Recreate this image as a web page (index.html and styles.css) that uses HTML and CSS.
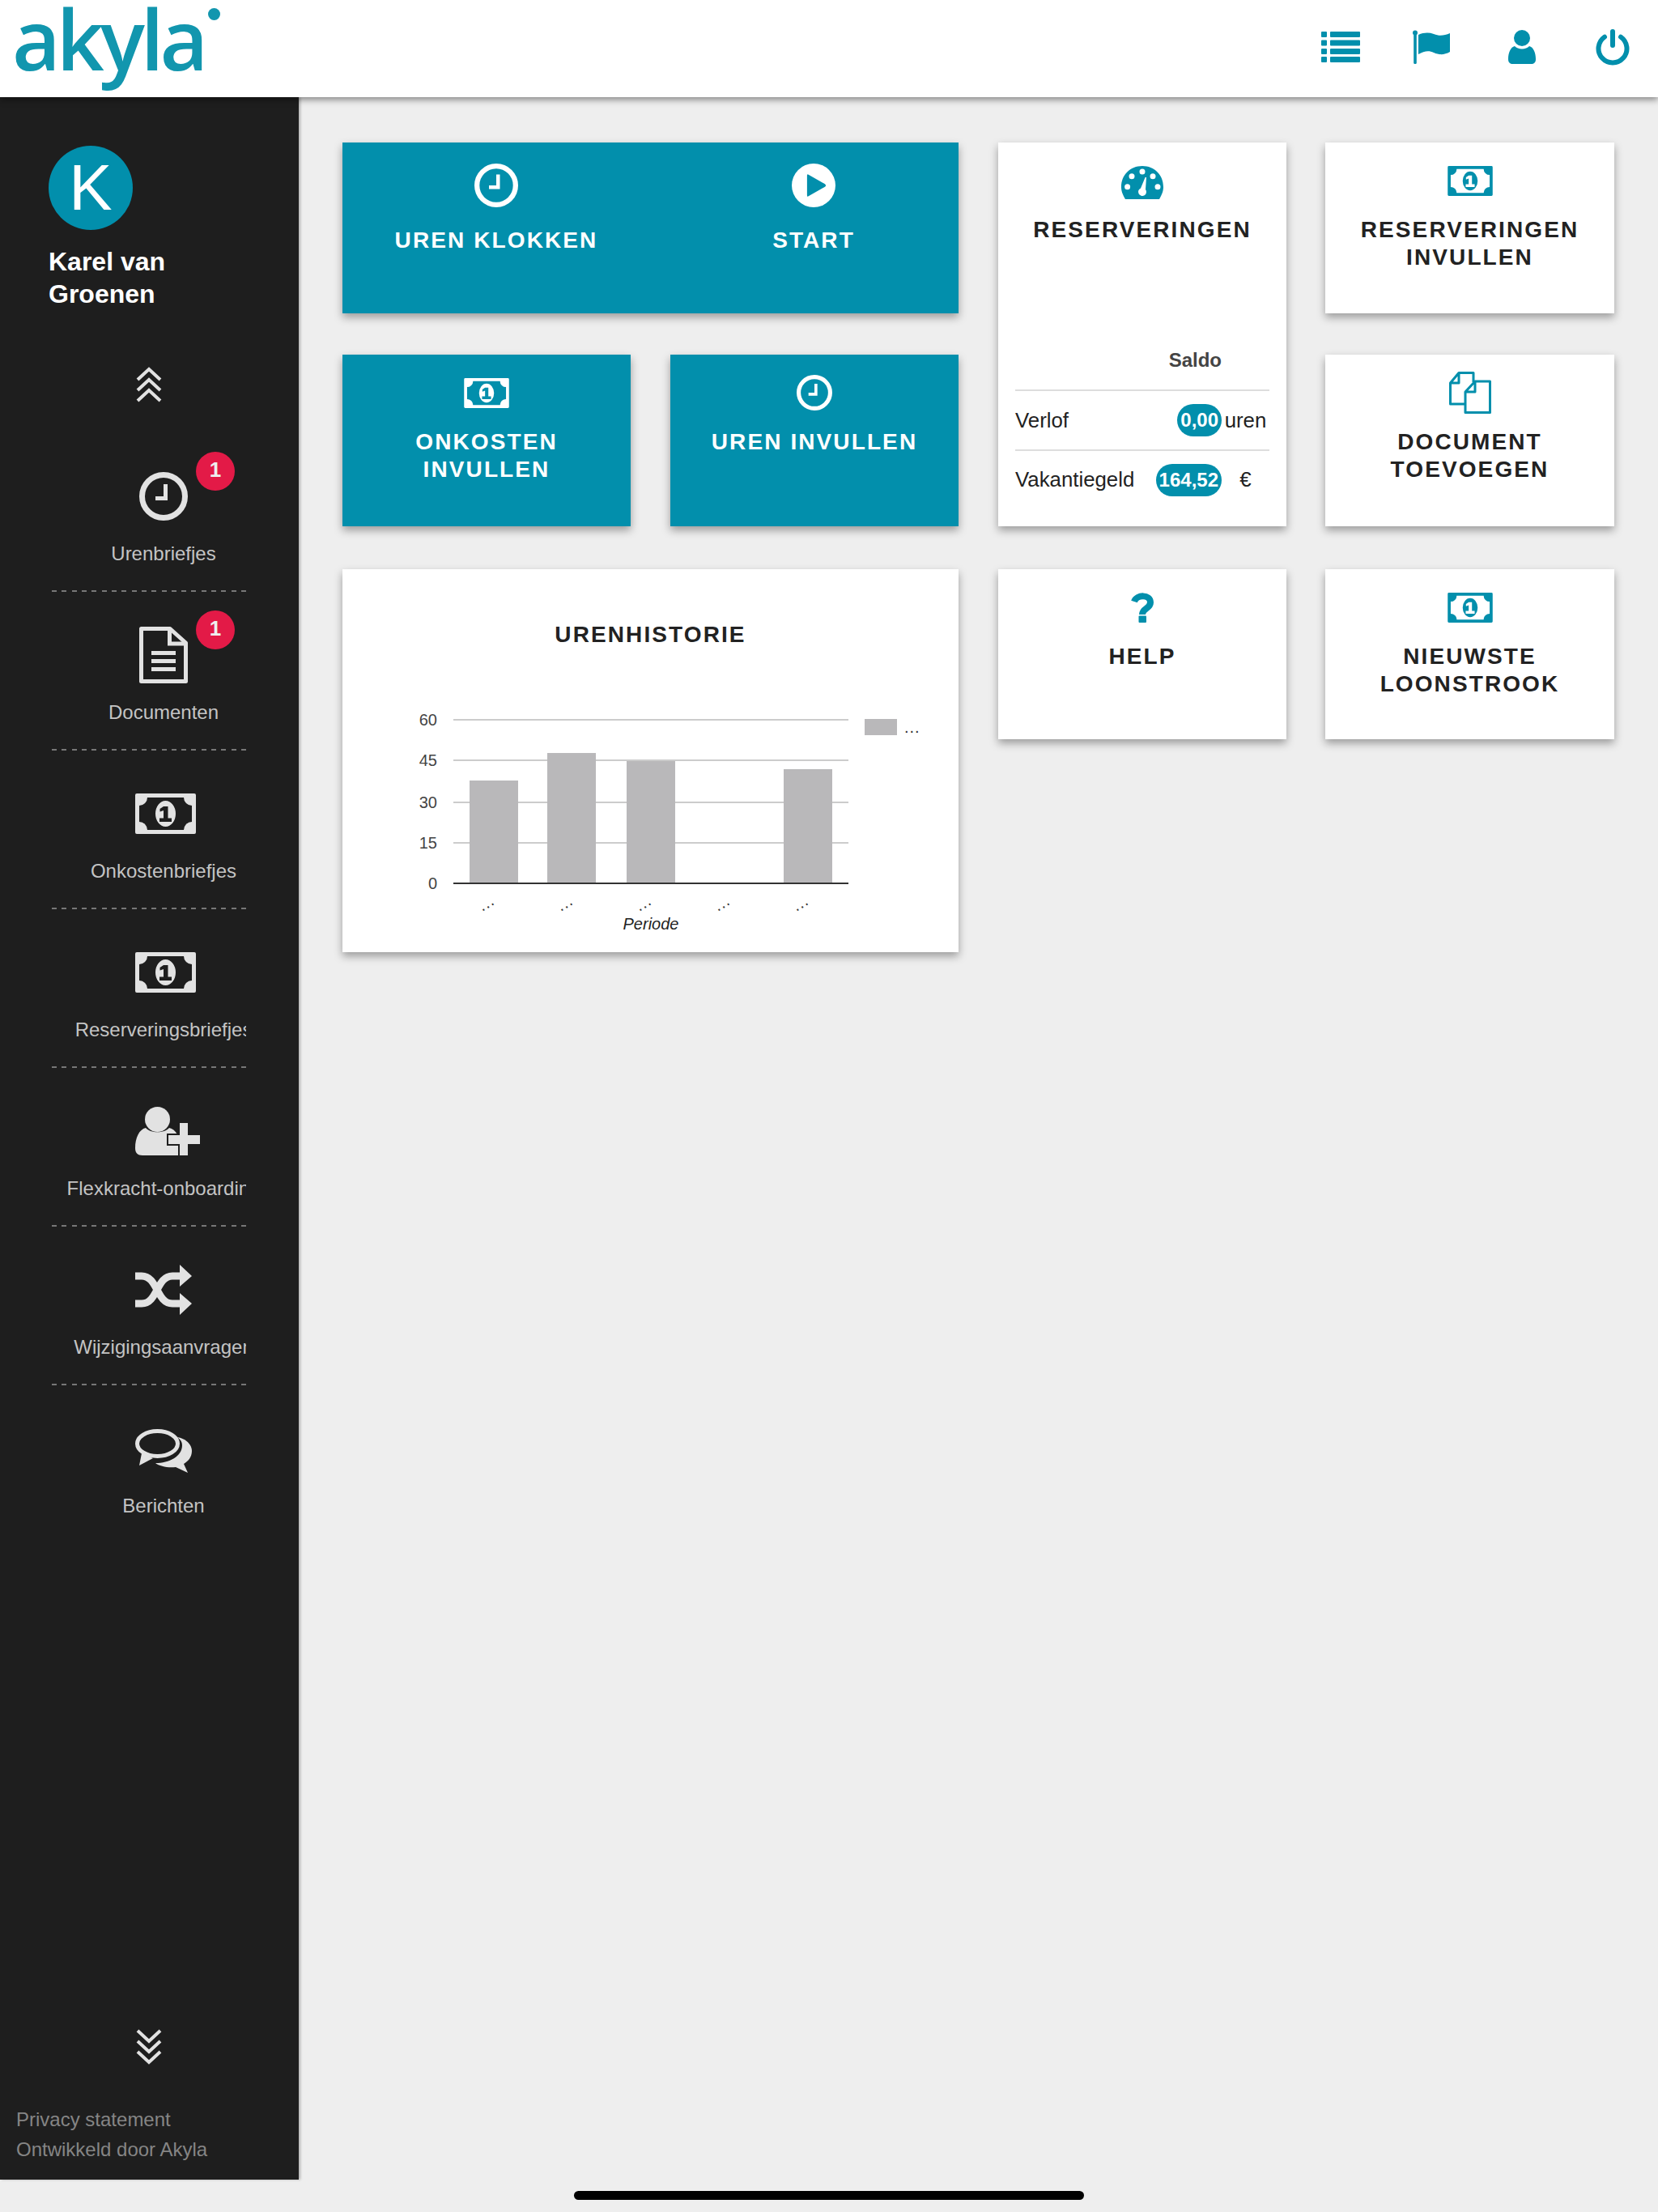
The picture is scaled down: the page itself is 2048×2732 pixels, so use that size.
FILE: index.html
```html
<!DOCTYPE html>
<html lang="nl">
<head>
  <meta charset="UTF-8">
  <meta name="viewport" content="width=device-width, initial-scale=1.0">
  <title>Akyla</title>
  <link rel="stylesheet" href="styles.css">
</head>
<body>
  <svg class="icon-defs" aria-hidden="true">
    <symbol id="i-clock" viewBox="0 0 60 60">
      <circle cx="30" cy="30" r="26.5" fill="none" stroke="currentColor" stroke-width="7"/>
      <path fill="currentColor" d="M30 15h5v20H20v-5h10z"/>
    </symbol>
    <symbol id="i-play" viewBox="0 0 60 60">
      <path fill="currentColor" fill-rule="evenodd" d="M30 0a30 30 0 1 1 0 60a30 30 0 1 1 0-60zM21 16.500q0-2.500 2-1.300L45.500 28q2.500 2 0 4L23 44.800q-2 1.200-2-1.300z"/>
    </symbol>
    <symbol id="i-money" viewBox="0 0 75 50">
      <path fill="currentColor" fill-rule="evenodd" d="M2 0h71a2 2 0 0 1 2 2v46a2 2 0 0 1-2 2H2a2 2 0 0 1-2-2V2a2 2 0 0 1 2-2zM15 5a10 10 0 0 1-10 10v20a10 10 0 0 1 10 10h45a10 10 0 0 1 10-10V15a10 10 0 0 1-10-10zM37.500 9a12.500 16 0 1 1 0 32a12.500 16 0 1 1 0-32zM35 16h5.500v14.500H45V35H30v-4.500h5V21l-4.500 1.500V19z"/>
    </symbol>
    <symbol id="i-doc" viewBox="0 0 60 70">
      <path fill="none" stroke="currentColor" stroke-width="5" stroke-linejoin="round" d="M2.500 2.500H38L57.500 20v47.500H2.500z"/>
      <path fill="none" stroke="currentColor" stroke-width="5" d="M37.500 3v18H57"/>
      <path fill="currentColor" d="M15 30h30v5H15zM15 40h30v5H15zM15 50h30v5H15z"/>
    </symbol>
    <symbol id="i-person-plus" viewBox="0 0 80 60">
      <circle cx="27.500" cy="15.500" r="15.500" fill="currentColor"/>
      <path fill="currentColor" d="M13 26c6 7 23 7 29 0c8 2 13 10 13 22v12H9c-6 0-9-3-9-9c0-13 5-23 13-25z"/>
      <path class="plus-gap" d="M55 20h10v15h15v11H65v14H55V46H41V35h14z"/>
    </symbol>
    <symbol id="i-shuffle" viewBox="0 0 70 62">
      <path fill="none" stroke="currentColor" stroke-width="9" d="M0 14h8c20 0 18 34 38 34h10M0 48h8c20 0 18-34 38-34h10"/>
      <path fill="currentColor" d="M55 0l15 14L55 27zM55 35l15 13L55 62z"/>
    </symbol>
    <symbol id="i-chat" viewBox="0 0 70 55">
      <ellipse cx="27.500" cy="18" rx="25" ry="15.500" fill="none" stroke="currentColor" stroke-width="5"/>
      <path fill="currentColor" d="M8 30L5 45l17-9zM52 10c12 2 18 10 18 17c0 8-5 13-10 16l5 11l-15-7c-10 1-20-1-25-5c17 0 33-8 33-22c0-4-2-7-6-10z"/>
    </symbol>
    <symbol id="i-up" viewBox="0 0 32 44">
      <path fill="none" stroke="currentColor" stroke-width="4" d="M2 16L16 3l14 13M2 29l14-13l14 13M2 42l14-13l14 13"/>
    </symbol>
    <symbol id="i-down" viewBox="0 0 32 44">
      <path fill="none" stroke="currentColor" stroke-width="4" d="M2 2l14 13L30 2M2 15l14 13l14-13M2 28l14 13l14-13"/>
    </symbol>
  </svg>

  <div class="page">
    <header class="topbar">
      <div class="logo">akyla<span class="logo-dot"></span></div>
      <div class="top-icons">
        <div class="top-slot">
          <svg class="ico-list" viewBox="0 0 48 38"><path d="M1 0h5a1 1 0 0 1 1 1v5a1 1 0 0 1-1 1H1a1 1 0 0 1-1-1V1a1 1 0 0 1 1-1zM12 0h35a1 1 0 0 1 1 1v5a1 1 0 0 1-1 1H12a1 1 0 0 1-1-1V1a1 1 0 0 1 1-1zM1 10.500h5a1 1 0 0 1 1 1v5a1 1 0 0 1-1 1H1a1 1 0 0 1-1-1v-5a1 1 0 0 1 1-1zM12 10.500h35a1 1 0 0 1 1 1v5a1 1 0 0 1-1 1H12a1 1 0 0 1-1-1v-5a1 1 0 0 1 1-1zM1 21h5a1 1 0 0 1 1 1v5a1 1 0 0 1-1 1H1a1 1 0 0 1-1-1v-5a1 1 0 0 1 1-1zM12 21h35a1 1 0 0 1 1 1v5a1 1 0 0 1-1 1H12a1 1 0 0 1-1-1v-5a1 1 0 0 1 1-1zM1 31h5a1 1 0 0 1 1 1v5a1 1 0 0 1-1 1H1a1 1 0 0 1-1-1v-5a1 1 0 0 1 1-1zM12 31h35a1 1 0 0 1 1 1v5a1 1 0 0 1-1 1H12a1 1 0 0 1-1-1v-5a1 1 0 0 1 1-1z"/></svg>
        </div>
        <div class="top-slot">
          <svg class="ico-flag" viewBox="0 0 46 42"><circle cx="3" cy="3.500" r="3"/><rect x="1.200" y="3" width="3.600" height="39" rx="1.500"/><path d="M7 6c7-3 13-3 19-1c7 3 13 2 20-1v23c-7 4-13 4-20 1c-6-3-12-2-19 2z"/></svg>
        </div>
        <div class="top-slot">
          <svg class="ico-user" viewBox="0 0 34 42"><circle cx="17" cy="10" r="10"/><path d="M8 20c4 4.500 14 4.500 18 0c5 1 8 8 8 16c0 4-2 6-6 6H6c-4 0-6-2-6-6c0-8 3-15 8-16z"/></svg>
        </div>
        <div class="top-slot">
          <svg class="ico-power" viewBox="0 0 42 46"><path fill="none" stroke="currentColor" stroke-width="6" stroke-linecap="round" d="M11 10.600A17.500 17.500 0 1 0 31 10.600M21 4v17"/></svg>
        </div>
      </div>
    </header>

    <div class="content">
      <aside class="sidebar">
        <div class="profile">
          <div class="avatar">K</div>
          <div class="profile-name">Karel van<br>Groenen</div>
        </div>
        <svg class="chevrons chevrons-up"><use href="#i-up"/></svg>

        <nav class="nav">
          <div class="nav-item">
            <span class="badge">1</span>
            <div class="nav-icon"><svg class="ni-clock"><use href="#i-clock"/></svg></div>
            <div class="nav-label">Urenbriefjes</div>
          </div>
          <div class="nav-item">
            <span class="badge">1</span>
            <div class="nav-icon"><svg class="ni-doc"><use href="#i-doc"/></svg></div>
            <div class="nav-label">Documenten</div>
          </div>
          <div class="nav-item">
            <div class="nav-icon"><svg class="ni-money"><use href="#i-money"/></svg></div>
            <div class="nav-label">Onkostenbriefjes</div>
          </div>
          <div class="nav-item">
            <div class="nav-icon"><svg class="ni-money"><use href="#i-money"/></svg></div>
            <div class="nav-label">Reserveringsbriefjes</div>
          </div>
          <div class="nav-item">
            <div class="nav-icon"><svg class="ni-person"><use href="#i-person-plus"/></svg></div>
            <div class="nav-label">Flexkracht-onboarding</div>
          </div>
          <div class="nav-item">
            <div class="nav-icon"><svg class="ni-shuffle"><use href="#i-shuffle"/></svg></div>
            <div class="nav-label">Wijzigingsaanvragen</div>
          </div>
          <div class="nav-item nav-item-last">
            <div class="nav-icon"><svg class="ni-chat"><use href="#i-chat"/></svg></div>
            <div class="nav-label">Berichten</div>
          </div>
        </nav>

        <svg class="chevrons chevrons-down"><use href="#i-down"/></svg>
        <div class="side-footer">
          <div>Privacy statement</div>
          <div>Ontwikkeld door Akyla</div>
        </div>
      </aside>

      <main class="main">
        <section class="tiles tiles-top">
          <div class="card card-teal card-wide">
            <div class="split">
              <div class="split-part">
                <div class="card-icon"><svg class="ci-round"><use href="#i-clock"/></svg></div>
                <div class="card-title">UREN KLOKKEN</div>
              </div>
              <div class="split-part">
                <div class="card-icon"><svg class="ci-round"><use href="#i-play"/></svg></div>
                <div class="card-title">START</div>
              </div>
            </div>
          </div>

          <div class="card card-saldo">
            <div class="card-icon">
              <svg class="ci-gauge" viewBox="0 0 52 41"><path fill-rule="evenodd" d="M5 41C1 34 0 30 0 26C0 11 11 0 26 0s26 11 26 26c0 4-1 8-5 15zM7.600 22.200a3.500 3.500 0 1 0 0 7a3.500 3.500 0 1 0 0-7zM13 9.200a3.500 3.500 0 1 0 0 7a3.500 3.500 0 1 0 0-7zM26 3.500a3.500 3.500 0 1 0 0 7a3.500 3.500 0 1 0 0-7zM39 9.200a3.500 3.500 0 1 0 0 7a3.500 3.500 0 1 0 0-7zM45 22.200a3.500 3.500 0 1 0 0 7a3.500 3.500 0 1 0 0-7zM29.600 14L31 14L30 29A5 5 0 1 1 24 27.400z"/></svg>
            </div>
            <div class="card-title">RESERVERINGEN</div>
            <table class="saldo">
              <tr>
                <th></th>
                <th class="saldo-head">Saldo</th>
                <th></th>
              </tr>
              <tr class="saldo-row">
                <td>Verlof</td>
                <td class="saldo-value"><span class="pill">0,00</span></td>
                <td class="saldo-unit">uren</td>
              </tr>
              <tr>
                <td>Vakantiegeld</td>
                <td class="saldo-value"><span class="pill">164,52</span></td>
                <td class="saldo-unit">€</td>
              </tr>
            </table>
          </div>

          <div class="card card-end">
            <div class="card-icon"><svg class="ci-money"><use href="#i-money"/></svg></div>
            <div class="card-title">RESERVERINGEN<br>INVULLEN</div>
          </div>

          <div class="card card-teal">
            <div class="card-icon"><svg class="ci-money"><use href="#i-money"/></svg></div>
            <div class="card-title">ONKOSTEN<br>INVULLEN</div>
          </div>

          <div class="card card-teal">
            <div class="card-icon"><svg class="ci-clock"><use href="#i-clock"/></svg></div>
            <div class="card-title">UREN INVULLEN</div>
          </div>

          <div class="card card-end">
            <div class="card-icon">
              <svg class="ci-docs" viewBox="0 0 52 52"><path fill="none" stroke="currentColor" stroke-width="3" stroke-linejoin="round" d="M20 40H1.500V14L12 1.500h18V13M12 2v12H2M32 12h18.500v38.500H20V25zM32 12v13H20"/></svg>
            </div>
            <div class="card-title">DOCUMENT<br>TOEVOEGEN</div>
          </div>
        </section>

        <section class="tiles tiles-bottom">
          <div class="card card-wide card-chart">
            <div class="card-title">URENHISTORIE</div>
            <svg class="chart" viewBox="0 0 761 375">
              <g class="grid">
                <rect x="137" y="87" width="488" height="2"/>
                <rect x="137" y="137" width="488" height="2"/>
                <rect x="137" y="189" width="488" height="2"/>
                <rect x="137" y="239" width="488" height="2"/>
              </g>
              <g class="bars">
                <rect x="157" y="163" width="60" height="126"/>
                <rect x="253" y="129" width="60" height="160"/>
                <rect x="351" y="139" width="60" height="150"/>
                <rect x="545" y="149" width="60" height="140"/>
                <rect x="645" y="87" width="40" height="20"/>
              </g>
              <rect class="axis" x="137" y="289" width="488" height="2"/>
              <g class="y-labels">
                <text x="117" y="95">60</text>
                <text x="117" y="145">45</text>
                <text x="117" y="197">30</text>
                <text x="117" y="247">15</text>
                <text x="117" y="297">0</text>
              </g>
              <g class="x-labels">
                <text transform="translate(181 320) rotate(-30)">...</text>
                <text transform="translate(278 320) rotate(-30)">...</text>
                <text transform="translate(375 320) rotate(-30)">...</text>
                <text transform="translate(472 320) rotate(-30)">...</text>
                <text transform="translate(569 320) rotate(-30)">...</text>
              </g>
              <text class="legend-label" x="694" y="104">...</text>
              <text class="x-title" x="381" y="347">Periode</text>
            </svg>
          </div>

          <div class="card card-short">
            <div class="card-icon">
              <svg class="ci-help" viewBox="0 0 28 37"><path fill="none" stroke="currentColor" stroke-width="8" d="M4 11C7 2 24 2 24 12c0 8-10 7-10 15"/><rect x="9.500" y="28.500" width="9.500" height="8.500" rx="1"/></svg>
            </div>
            <div class="card-title">HELP</div>
          </div>

          <div class="card card-short card-end">
            <div class="card-icon"><svg class="ci-money"><use href="#i-money"/></svg></div>
            <div class="card-title">NIEUWSTE<br>LOONSTROOK</div>
          </div>
        </section>
      </main>
    </div>

    <div class="home-bar"><div class="home-indicator"></div></div>
  </div>
</body>
</html>
```

FILE: styles.css
```css
* {
  margin: 0;
  padding: 0;
  box-sizing: border-box;
}

body {
  background-color: #eeeeee;
  font-family: "Liberation Sans", Arial, sans-serif;
  color: #222;
  overflow: hidden;
}

.icon-defs {
  display: none;
}

.page {
  width: 2048px;
  height: 2732px;
  display: flex;
  flex-direction: column;
}

/* top bar */
.topbar {
  height: 120px;
  flex: none;
  background-color: white;
  display: flex;
  justify-content: space-between;
  box-shadow: 0 3px 8px rgba(0,0,0,0.45);
  position: relative;
  z-index: 2;
}

.logo {
  font-family: "Open Sans", sans-serif;
  font-weight: 600;
  font-size: 103px;
  line-height: 94px;
  height: 120px;
  color: #1296ae;
  padding-left: 15px;
  position: relative;
  letter-spacing: -5px;
}

.logo-dot {
  position: absolute;
  left: 257px;
  top: 10px;
  width: 15px;
  height: 15px;
  border-radius: 50%;
  background-color: #1296ae;
}

.top-icons {
  display: flex;
  align-items: center;
}

.top-slot {
  width: 112px;
  display: flex;
  justify-content: center;
  color: #028fac;
  fill: #028fac;
  padding-bottom: 4px;
}

.ico-list { width: 48px; height: 38px; }
.ico-flag { width: 46px; height: 42px; }
.ico-user { width: 34px; height: 42px; }
.ico-power { width: 42px; height: 46px; }

.content {
  flex: 1;
  display: flex;
  min-height: 0;
}

/* sidebar */
.sidebar {
  width: 369px;
  flex: none;
  background-color: #1e1e1e;
  box-shadow: 2px 0 3px rgba(0,0,0,0.25);
  display: flex;
  flex-direction: column;
  padding-top: 60px;
  color: #e2e2e2;
}

.profile {
  padding-left: 60px;
}

.avatar {
  width: 104px;
  height: 104px;
  border-radius: 50%;
  background-color: #028fac;
  color: white;
  font-size: 80px;
  display: flex;
  justify-content: center;
  align-items: center;
}

.profile-name {
  margin-top: 19px;
  font-size: 32px;
  font-weight: bold;
  line-height: 40px;
  color: white;
}

.chevrons {
  width: 32px;
  height: 44px;
  margin-left: 168px;
  flex: none;
}

.chevrons-up {
  margin-top: 70px;
}

.nav {
  margin: 38px 0 0 64px;
  width: 240px;
}

.nav-item {
  height: 196px;
  position: relative;
  overflow: hidden;
  background: repeating-linear-gradient(to right, #777 0 6px, transparent 6px 12.320px) left bottom / 100% 2px no-repeat;
  display: flex;
  flex-direction: column;
  align-items: center;
  padding: 43px 0 0 36px;
}

.nav-item-last {
  background: none;
}

.nav-icon {
  height: 70px;
  display: flex;
  align-items: center;
  justify-content: center;
  flex: none;
}

.ni-clock { width: 60px; height: 60px; }
.ni-doc { width: 60px; height: 70px; }
.ni-money { width: 75px; height: 50px; margin-left: 5px; }
.ni-person { width: 80px; height: 60px; margin-left: 10px; }
.ni-shuffle { width: 70px; height: 62px; }
.ni-chat { width: 70px; height: 55px; margin-top: 6px; }

.plus-gap {
  fill: #e2e2e2;
  stroke: #1e1e1e;
  stroke-width: 4px;
  paint-order: stroke;
}

.nav-label {
  margin-top: 21px;
  font-size: 24px;
  line-height: 30px;
  color: #c4c4c4;
  white-space: nowrap;
  flex: none;
}

.badge {
  position: absolute;
  left: 178px;
  top: 23px;
  width: 48px;
  height: 48px;
  border-radius: 50%;
  background-color: #e31a47;
  color: #eee;
  font-size: 26px;
  font-weight: bold;
  display: flex;
  justify-content: center;
  align-items: center;
  padding-bottom: 4px;
}

.chevrons-down {
  margin-top: auto;
}

.side-footer {
  margin-top: 49px;
  padding: 0 0 19px 20px;
  font-size: 24px;
  line-height: 37px;
  color: #858585;
}

/* tiles */
.main {
  flex: 1;
  padding: 56px 54px 0;
}

.tiles {
  display: grid;
  grid-template-columns: repeat(4, 356px);
  column-gap: 49px;
}

.tiles-top {
  grid-template-rows: 211px 212px;
  row-gap: 51px;
}

.tiles-bottom {
  margin-top: 53px;
  align-items: start;
}

.card {
  background-color: white;
  box-shadow: 0 5px 10px rgba(0,0,0,0.35);
  padding-top: 20px;
  text-align: center;
}

.card-end {
  margin-left: -1px;
}

.card-teal {
  background-color: #028fac;
  color: white;
}

.card-wide {
  grid-column: span 2;
}

.card-short {
  height: 210px;
}

.card-icon {
  height: 54px;
  margin-bottom: 17px;
  display: flex;
  align-items: center;
  justify-content: center;
  color: #028fac;
  fill: #028fac;
}

.card-teal .card-icon {
  color: white;
  fill: white;
}

.ci-round { width: 54px; height: 54px; }
.ci-clock { width: 44px; height: 44px; }
.ci-money { width: 56px; height: 37px; }
.ci-gauge { width: 52px; height: 41px; margin-top: 4px; }
.ci-docs { width: 52px; height: 52px; }
.ci-help { width: 28px; height: 37px; }

.card-title {
  font-weight: bold;
  font-size: 28px;
  line-height: 34px;
  letter-spacing: 2.100px;
}

.card-wide.card-teal {
  padding-top: 26px;
}

.split {
  display: grid;
  grid-template-columns: 380px 1fr;
  column-gap: 23px;
}

.split .card-icon {
  margin-bottom: 24px;
}

/* saldo card */
.card-saldo {
  grid-row: span 2;
  padding-left: 21px;
  padding-right: 21px;
  display: flex;
  flex-direction: column;
}

.saldo {
  margin-top: auto;
  margin-bottom: 22px;
  width: 100%;
  border-collapse: collapse;
  font-size: 25.800px;
}

.saldo th {
  height: 54px;
  padding-bottom: 20px;
  font-size: 24px;
  color: #444;
}

.saldo td {
  height: 72px;
  border-top: 2px solid #dddddd;
  text-align: left;
}

.saldo .saldo-row td {
  height: 74px;
}

.saldo .saldo-head {
  text-align: right;
}

.saldo .saldo-value {
  text-align: right;
  padding: 0;
}

.saldo .saldo-unit {
  width: 59px;
  text-align: center;
}

.pill {
  display: inline-block;
  height: 40px;
  line-height: 40px;
  padding: 0 4px;
  border-radius: 20px;
  background-color: #028fac;
  color: white;
  font-size: 24px;
  font-weight: bold;
}

/* chart */
.card-chart {
  height: 473px;
  padding-top: 64px;
}

.chart {
  display: block;
  width: 761px;
  height: 375px;
  font-size: 20px;
}

.grid { fill: #cccccc; }
.bars { fill: #b9b8ba; }
.axis { fill: #333333; }

.y-labels {
  text-anchor: end;
  fill: #444;
}

.x-labels {
  text-anchor: middle;
  fill: #333;
  letter-spacing: 1px;
}

.legend-label {
  fill: #333;
  letter-spacing: 1px;
}

.x-title {
  text-anchor: middle;
  font-style: italic;
  fill: #222;
}

/* bottom of the screen */
.home-bar {
  height: 40px;
  flex: none;
  display: flex;
  justify-content: center;
  padding-top: 14px;
}

.home-indicator {
  width: 630px;
  height: 11px;
  border-radius: 6px;
  background-color: black;
}
```
